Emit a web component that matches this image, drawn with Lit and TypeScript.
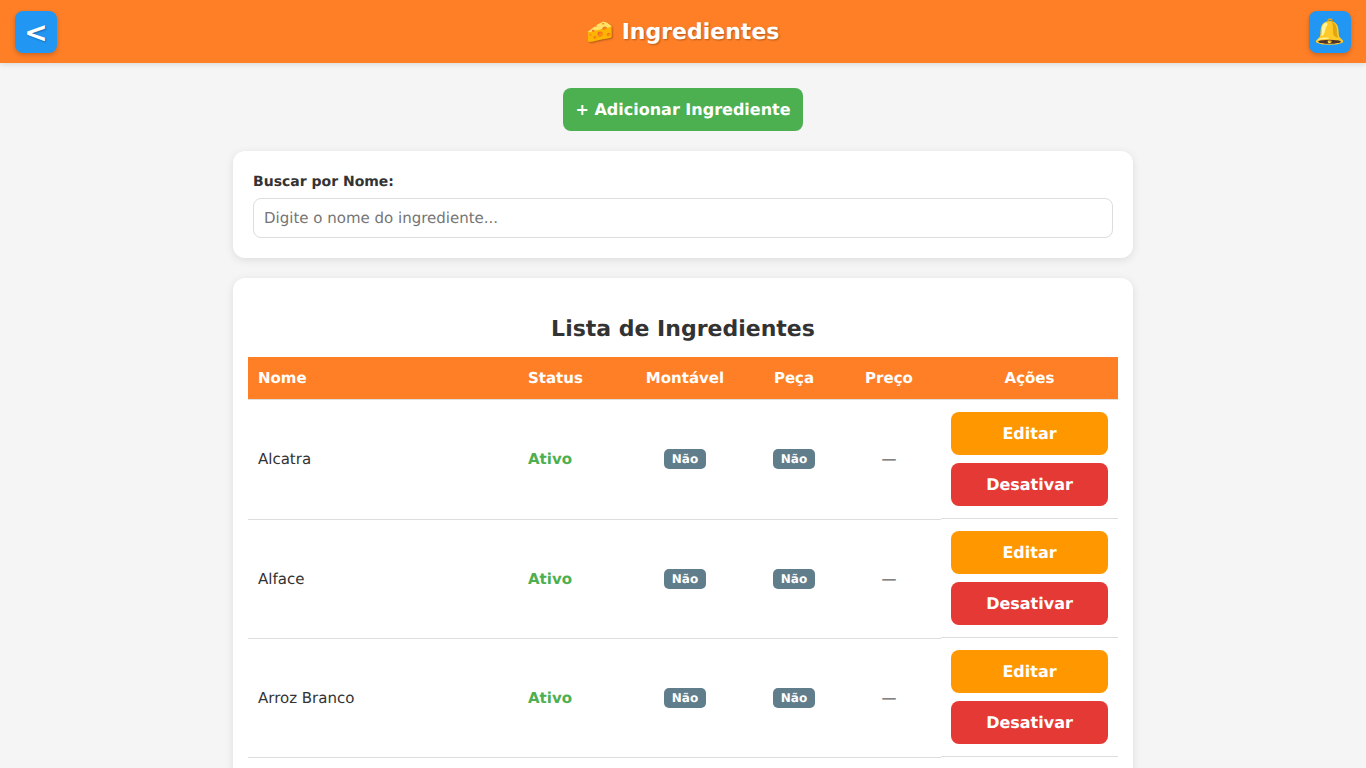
import { LitElement, html, css } from "lit";
import { customElement } from "lit/decorators.js";

const rows = ["Alcatra", "Alface", "Arroz Branco"];

@customElement("app-root")
export class AppRoot extends LitElement {
  static styles = css`
    :host { display: block; min-height: 768px; background: #f5f5f5; color: #333; font-family: "DejaVu Sans", sans-serif; font-size: 15px; }
    * { box-sizing: border-box; text-rendering: geometricPrecision; }
    .top { height: 63px; background: #ff7f27; display: flex; align-items: center; justify-content: space-between; padding: 0 15px; box-shadow: 0 2px 5px rgba(0,0,0,.1); }
    .top h1 { margin: 0; padding-top: 2px; color: #fff; font-size: 22px; font-weight: 700; text-shadow: 1px 1px 2px rgba(0,0,0,.3); }
    .icon { width: 42px; height: 42px; border: 0; border-radius: 8px; background: #2196f3; color: #fff; font-family: inherit; padding: 0; display: flex; align-items: center; justify-content: center; box-shadow: 0 2px 5px rgba(0,0,0,.2); }
    .back { padding-top: 2px; font-size: 28px; font-weight: 700; text-shadow: 1px 1px 2px rgba(0,0,0,.3); }
    .bell { font-size: 25px; }
    main { width: 900px; margin: 0 auto; padding-top: 25px; display: flex; flex-direction: column; gap: 20px; }
    .add { align-self: center; height: 43px; padding: 0 12px; border: 0; border-radius: 8px; background: #4caf50; color: #fff; font: 700 16px "DejaVu Sans", sans-serif; }
    .card { background: #fff; border-radius: 12px; box-shadow: 0 2px 8px rgba(0,0,0,.1); }
    .search { padding: 20px; display: flex; flex-direction: column; gap: 5px; }
    label { font-size: 14px; font-weight: 700; line-height: 22px; }
    input { width: 100%; height: 40px; padding: 0 10px; border: 1px solid #ddd; border-radius: 8px; font: 15px "DejaVu Sans", sans-serif; outline: none; }
    input::placeholder { color: #757575; }
    .list { padding: 15px 15px 40px; }
    h2 { margin: 24px 0 14px; text-align: center; font-size: 22px; line-height: 26px; font-weight: 700; }
    table { width: 100%; border-collapse: collapse; }
    th { background: #ff7f27; color: #fff; padding: 12px 10px; font-size: 15px; font-weight: 700; border-bottom: 1px solid #ddd; }
    td { padding: 12px 10px; border-bottom: 1px solid #ddd; }
    .l { text-align: left; }
    .c { text-align: center; }
    .name { width: 270px; }
    .status { width: 101px; }
    .mont { width: 132px; }
    .peca { width: 86px; }
    .preco { width: 104px; }
    .ativo { color: #4caf50; font-weight: 700; }
    .dash { color: #666; }
    .badge { display: inline-block; padding: 3px 8px; border-radius: 5px; background: #607d8b; color: #fff; font-size: 12px; font-weight: 700; line-height: 14px; }
    td.actions { display: flex; flex-direction: column; gap: 8px; }
    .btn { height: 43px; border: 0; border-radius: 8px; color: #fff; font: 700 16px "DejaVu Sans", sans-serif; }
    .edit { background: #ff9800; }
    .off { background: #e53935; }
  `;

  render() {
    return html`
      <header class="top">
        <button class="icon back">&lt;</button>
        <h1>🧀 Ingredientes</h1>
        <button class="icon bell">🔔</button>
      </header>
      <main>
        <button class="add">+ Adicionar Ingrediente</button>
        <section class="card search">
          <label for="q">Buscar por Nome:</label>
          <input id="q" placeholder="Digite o nome do ingrediente..." />
        </section>
        <section class="card list">
          <h2>Lista de Ingredientes</h2>
          <table>
            <thead>
              <tr>
                <th class="l name">Nome</th>
                <th class="l status">Status</th>
                <th class="c mont">Montável</th>
                <th class="c peca">Peça</th>
                <th class="c preco">Preço</th>
                <th class="c">Ações</th>
              </tr>
            </thead>
            <tbody>
              ${rows.map((n) => html`
                <tr>
                  <td class="l">${n}</td>
                  <td class="l ativo">Ativo</td>
                  <td class="c"><span class="badge">Não</span></td>
                  <td class="c"><span class="badge">Não</span></td>
                  <td class="c dash">—</td>
                  <td class="actions">
                    <button class="btn edit">Editar</button>
                    <button class="btn off">Desativar</button>
                  </td>
                </tr>`)}
            </tbody>
          </table>
        </section>
      </main>
    `;
  }
}
